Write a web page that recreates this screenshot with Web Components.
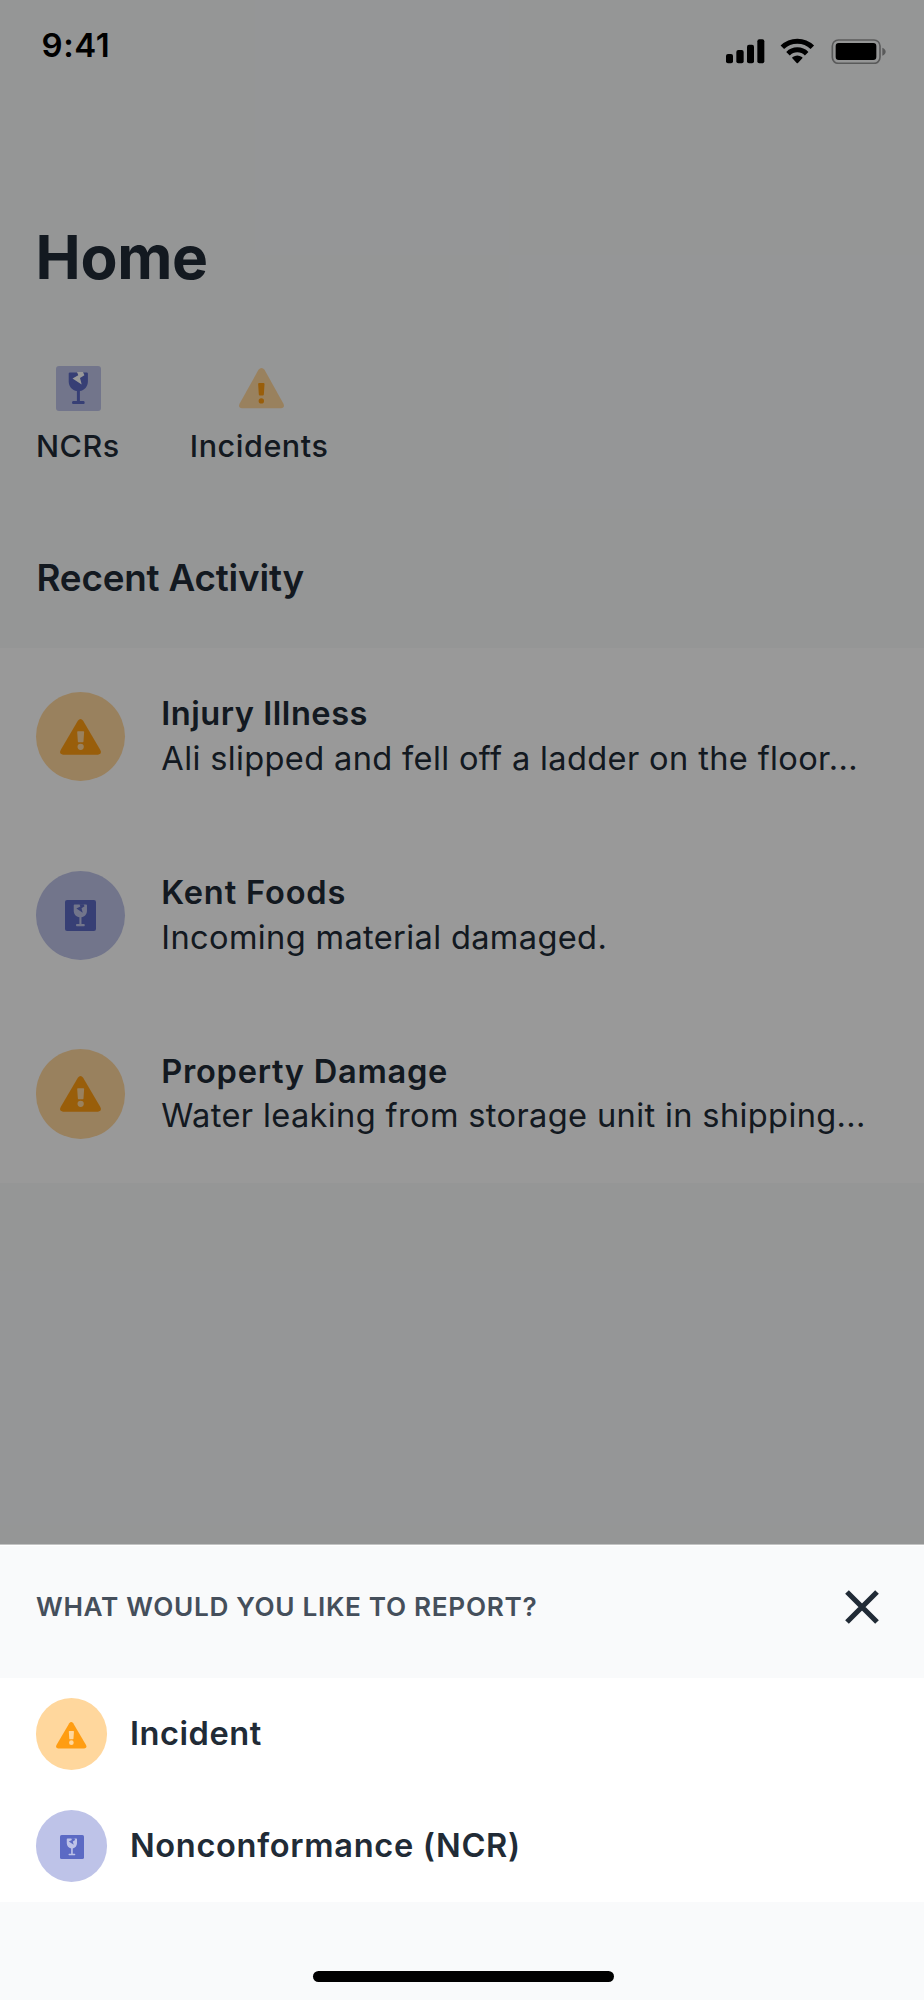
<!DOCTYPE html>
<html lang="en">
<head>
<meta charset="utf-8">
<title>Home</title>
<style>
html, body { margin: 0; padding: 0; }
body { width: 924px; height: 2000px; overflow: hidden; font-family: Inter, "Liberation Sans", sans-serif; color: #212b36; }
</style>
</head>
<body>
<home-screen></home-screen>
<script>
const define = (name, html) => {
  const template = document.createElement('template');
  template.innerHTML = html;
  customElements.define(name, class extends HTMLElement {
    constructor() {
      super();
      this.attachShadow({ mode: 'open' }).append(template.content.cloneNode(true));
    }
  });
};

// Icons take their two tones and their size from custom properties.
define('incident-icon', `
<style>
:host { display: block; width: var(--size, 41px); }
svg { display: block; width: 100%; overflow: visible; }
.sign { fill: var(--sign, #ff9d12); }
.mark { fill: var(--mark, #ffd79d); }
</style>
<svg viewBox="0 0 124 108">
  <path class="sign" d="M54 5Q62-5 70 5L122 94Q128 106 115 108H9Q-4 106 2 94Z"/>
  <path class="mark" d="M52 39Q52 37 54 37H71Q73 37 73 39L71 68Q71 70 69 70H56Q54 70 54 68Z"/>
  <circle class="mark" cx="62.5" cy="84" r="9.5"/>
</svg>`);

define('incident-outline-icon', `
<style>
:host { display: block; width: 45px; margin-left: 5px; }
svg { display: block; width: 100%; }
</style>
<svg viewBox="0 0 134 120">
  <path fill="#ffd79d" d="M58 5Q67-5 76 5L132 106Q138 118 125 120H9Q-4 118 2 106Z"/>
  <path fill="#ff9d12" d="M57 48Q57 45 60 45H73Q76 45 76 48L74 79Q74 82 71 82H62Q59 82 59 79Z"/>
  <circle cx="66.5" cy="98" r="8" fill="#ff9d12"/>
</svg>`);

define('ncr-icon', `
<style>
:host { display: block; width: var(--size, 31px); }
svg { display: block; width: 100%; }
.tile { fill: var(--tile, #5c6ac4); }
.glass { fill: var(--glass, #bec3e8); }
.crack { fill: var(--crack, #5c6ac4); }
</style>
<svg viewBox="0 0 45 45">
  <rect class="tile" width="45" height="45" rx="3"/>
  <path class="glass" d="M14 6.4H30.7Q31.9 6.4 31.9 7.6V15.5C31.9 20.5 28.4 24.4 23.9 25.1V35H27.6Q28.7 35 28.7 36.5T27.6 38H17.1Q16 38 16 36.5T17.1 35H20.9V25.1C16.2 24.4 12.7 20.5 12.7 15.5V7.6Q12.7 6.4 14 6.4Z"/>
  <path class="crack" d="M21 6H27L28.4 9.2L24 12L25.7 18.5L16.5 12.4L22.3 9.3Z"/>
</svg>`);

define('status-bar', `
<style>
:host { display: flex; justify-content: space-between; align-items: flex-start; height: 90px; padding: 0 37px 0 41.500px; color: #000; }
time { font-size: 33px; font-weight: 600; line-height: 90px; letter-spacing: .53px; }
svg { width: 161px; height: 26px; margin-top: 38px; }
</style>
<time>9:41</time>
<svg viewBox="78 54 483 78">
  <rect x="78" y="102" width="21" height="28" rx="6"/>
  <rect x="109" y="90" width="22" height="40" rx="6"/>
  <rect x="141" y="74" width="21" height="56" rx="6"/>
  <rect x="172" y="58" width="21" height="72" rx="6"/>
  <path d="M247 82A64 64 0 0 1 337 82M264 101A39.500 39.500 0 0 1 320 101" fill="none" stroke="#000" stroke-width="15"/>
  <path d="M277 115Q275 113 278 111Q292 102 306 111Q309 113 307 115L294 129Q292 131 290 129Z"/>
  <rect x="397" y="60" width="143" height="70" rx="18" fill="none" stroke="#000" stroke-opacity=".4" stroke-width="5"/>
  <rect x="407" y="69" width="122" height="51" rx="9"/>
  <path d="M547 83Q557 87 557 95T547 107Z" fill-opacity=".4"/>
</svg>`);

define('shortcut-link', `
<style>
:host { display: flex; flex-direction: column; align-items: center; width: max-content; }
.icon { display: flex; align-items: center; height: 45px; }
.label { margin-top: 15px; font-size: 30.5px; font-weight: 500; line-height: 40px; letter-spacing: .55px; }
</style>
<div class="icon"><slot name="icon"></slot></div>
<div class="label"><slot></slot></div>`);

define('icon-badge', `
<style>
:host { display: flex; flex: none; align-items: center; justify-content: center; width: var(--badge, 89.300px); height: var(--badge, 89.300px); border-radius: 50%; background: #ffd79d; }
:host([tone="indigo"]) { background: #bec3e8; }
</style>
<slot></slot>`);

define('activity-row', `
<style>
:host { display: flex; align-items: center; gap: 36px; height: 178.600px; padding-left: 36px; box-sizing: border-box; font-size: 32.600px; line-height: 44.650px; white-space: nowrap; }
.copy { margin-top: -1.500px; }
.title { font-weight: 600; letter-spacing: var(--title-spacing, .53px); }
.note { letter-spacing: .36px; }
</style>
<slot name="badge"></slot>
<div class="copy">
  <div class="title"><slot name="title"></slot></div>
  <div class="note"><slot></slot></div>
</div>`);

define('report-option', `
<style>
:host { display: flex; align-items: center; gap: 22.500px; height: 112px; padding-left: 36px; font-size: 32.600px; font-weight: 600; line-height: 44px; letter-spacing: var(--spacing, .55px); --badge: 71.400px; }
span { margin-top: -2px; }
</style>
<slot name="badge"></slot><span><slot></slot></span>`);

define('report-sheet', `
<style>
:host { display: flex; flex-direction: column; height: 456px; box-sizing: border-box; border-top: 1px solid #c3c4c4; box-shadow: inset 0 1px #fff; background: #f9fafb; }
header { display: flex; align-items: center; justify-content: space-between; height: 124px; padding: 0 45px 9px 36px; }
h2 { margin: 0; font-size: 26.200px; font-weight: 600; line-height: 36px; letter-spacing: .67px; color: #454f5b; }
svg { width: 34px; height: 34px; }
.options { background: #fff; }
.grip { width: 301px; height: 11px; margin: auto auto 18px 313px; border-radius: 6px; background: #000; }
</style>
<header>
  <h2>WHAT WOULD YOU LIKE TO REPORT?</h2>
  <svg viewBox="0 0 34 34"><path d="M2 2L32 32M32 2L2 32" fill="none" stroke="#212b36" stroke-width="5.200"/></svg>
</header>
<div class="options"><slot></slot></div>
<div class="grip"></div>`);

define('home-screen', `
<style>
:host { display: block; position: relative; width: 924px; height: 2000px; overflow: hidden; background: #f9fafb; }
h1 { margin: 127px 0 0 35.500px; font-size: 60.500px; font-weight: 700; line-height: 80px; letter-spacing: -.3px; }
.shortcuts { display: flex; gap: 70px; margin: 69px 0 0 36px; --tile: #bec3e8; --glass: #5c6ac4; --crack: #fff; --size: 45px; }
.shortcuts ncr-icon { margin-left: 1px; }
h2 { margin: 92px 0 0 36.500px; font-size: 36.800px; font-weight: 600; line-height: 40px; letter-spacing: -.18px; }
.activity { margin-top: 49.500px; background: #fff; }
.scrim { position: absolute; inset: 0; background: rgba(0, 0, 0, .4); }
report-sheet { position: absolute; left: 0; right: 0; bottom: 0; }
.sheet-incident { --size: 30.500px; margin-top: 2px; }
.sheet-ncr { --size: 24px; margin: 2px 0 0 1px; }
</style>
<status-bar></status-bar>
<h1>Home</h1>
<nav class="shortcuts">
  <shortcut-link><ncr-icon slot="icon"></ncr-icon>NCRs</shortcut-link>
  <shortcut-link><incident-outline-icon slot="icon"></incident-outline-icon>Incidents</shortcut-link>
</nav>
<h2>Recent Activity</h2>
<section class="activity">
  <activity-row>
    <icon-badge slot="badge"><incident-icon></incident-icon></icon-badge>
    <span slot="title">Injury Illness</span>Ali slipped and fell off a ladder on the floor...
  </activity-row>
  <activity-row style="--title-spacing:.84px">
    <icon-badge slot="badge" tone="indigo"><ncr-icon></ncr-icon></icon-badge>
    <span slot="title">Kent Foods</span>Incoming material damaged.
  </activity-row>
  <activity-row style="--title-spacing:.74px">
    <icon-badge slot="badge"><incident-icon></incident-icon></icon-badge>
    <span slot="title">Property Damage</span>Water leaking from storage unit in shipping...
  </activity-row>
</section>
<div class="scrim"></div>
<report-sheet>
  <report-option>
    <icon-badge slot="badge"><incident-icon class="sheet-incident"></incident-icon></icon-badge>Incident
  </report-option>
  <report-option style="--spacing:.68px">
    <icon-badge slot="badge" tone="indigo"><ncr-icon class="sheet-ncr"></ncr-icon></icon-badge>Nonconformance (NCR)
  </report-option>
</report-sheet>`);
</script>
</body>
</html>
